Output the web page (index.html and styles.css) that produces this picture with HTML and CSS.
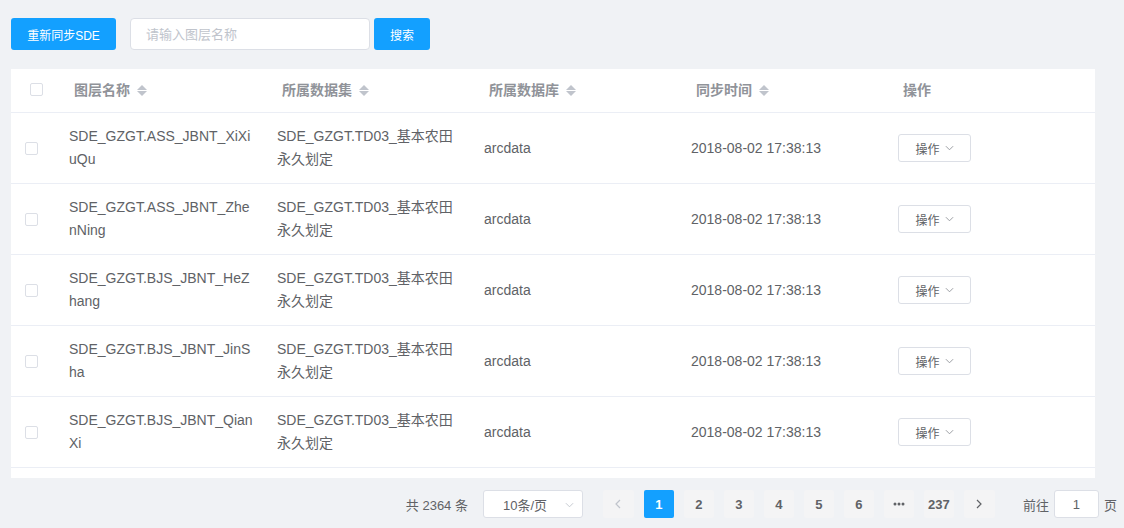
FILE: index.html
```html
<!DOCTYPE html>
<html lang="zh-CN">
<head>
<meta charset="utf-8">
<title>图层同步</title>
<link rel="stylesheet" href="styles.css">
</head>
<body>
<div class="page">
  <div class="toolbar">
    <button class="btn btn-primary btn-sync">重新同步SDE</button>
    <input class="search-input" type="text" placeholder="请输入图层名称">
    <button class="btn btn-primary btn-search">搜索</button>
  </div>

  <div class="table-wrap">
    <div class="trow thead">
      <div class="cell c-check"><span class="checkbox"></span></div>
      <div class="cell c-col c-first">图层名称<span class="sort"><i class="up"></i><i class="down"></i></span></div>
      <div class="cell c-col">所属数据集<span class="sort"><i class="up"></i><i class="down"></i></span></div>
      <div class="cell c-col">所属数据库<span class="sort"><i class="up"></i><i class="down"></i></span></div>
      <div class="cell c-col">同步时间<span class="sort"><i class="up"></i><i class="down"></i></span></div>
      <div class="cell c-last">操作</div>
    </div>

    <div class="trow tbody-row">
      <div class="cell c-check"><span class="checkbox"></span></div>
      <div class="cell c-col c-first">SDE_GZGT.ASS_JBNT_XiXiuQu</div>
      <div class="cell c-col">SDE_GZGT.TD03_基本农田永久划定</div>
      <div class="cell c-col">arcdata</div>
      <div class="cell c-col">2018-08-02 17:38:13</div>
      <div class="cell c-last"><button class="op-btn">操作<svg class="chev" viewBox="0 0 10 6" width="9" height="6"><path d="M1 1l4 4 4-4" fill="none" stroke="#909399" stroke-width="1"/></svg></button></div>
    </div>
    <div class="trow tbody-row">
      <div class="cell c-check"><span class="checkbox"></span></div>
      <div class="cell c-col c-first">SDE_GZGT.ASS_JBNT_ZhenNing</div>
      <div class="cell c-col">SDE_GZGT.TD03_基本农田永久划定</div>
      <div class="cell c-col">arcdata</div>
      <div class="cell c-col">2018-08-02 17:38:13</div>
      <div class="cell c-last"><button class="op-btn">操作<svg class="chev" viewBox="0 0 10 6" width="9" height="6"><path d="M1 1l4 4 4-4" fill="none" stroke="#909399" stroke-width="1"/></svg></button></div>
    </div>
    <div class="trow tbody-row">
      <div class="cell c-check"><span class="checkbox"></span></div>
      <div class="cell c-col c-first">SDE_GZGT.BJS_JBNT_HeZhang</div>
      <div class="cell c-col">SDE_GZGT.TD03_基本农田永久划定</div>
      <div class="cell c-col">arcdata</div>
      <div class="cell c-col">2018-08-02 17:38:13</div>
      <div class="cell c-last"><button class="op-btn">操作<svg class="chev" viewBox="0 0 10 6" width="9" height="6"><path d="M1 1l4 4 4-4" fill="none" stroke="#909399" stroke-width="1"/></svg></button></div>
    </div>
    <div class="trow tbody-row">
      <div class="cell c-check"><span class="checkbox"></span></div>
      <div class="cell c-col c-first">SDE_GZGT.BJS_JBNT_JinSha</div>
      <div class="cell c-col">SDE_GZGT.TD03_基本农田永久划定</div>
      <div class="cell c-col">arcdata</div>
      <div class="cell c-col">2018-08-02 17:38:13</div>
      <div class="cell c-last"><button class="op-btn">操作<svg class="chev" viewBox="0 0 10 6" width="9" height="6"><path d="M1 1l4 4 4-4" fill="none" stroke="#909399" stroke-width="1"/></svg></button></div>
    </div>
    <div class="trow tbody-row">
      <div class="cell c-check"><span class="checkbox"></span></div>
      <div class="cell c-col c-first">SDE_GZGT.BJS_JBNT_QianXi</div>
      <div class="cell c-col">SDE_GZGT.TD03_基本农田永久划定</div>
      <div class="cell c-col">arcdata</div>
      <div class="cell c-col">2018-08-02 17:38:13</div>
      <div class="cell c-last"><button class="op-btn">操作<svg class="chev" viewBox="0 0 10 6" width="9" height="6"><path d="M1 1l4 4 4-4" fill="none" stroke="#909399" stroke-width="1"/></svg></button></div>
    </div>
    <div class="trow tbody-row">
      <div class="cell c-check"><span class="checkbox"></span></div>
      <div class="cell c-col c-first">SDE_GZGT.BJS_JBNT_XinHua</div>
      <div class="cell c-col">SDE_GZGT.TD03_基本农田永久划定</div>
      <div class="cell c-col">arcdata</div>
      <div class="cell c-col">2018-08-02 17:38:13</div>
      <div class="cell c-last"><button class="op-btn">操作</button></div>
    </div>
  </div>

  <div class="pagination">
    <span class="total">共 2364 条</span>
    <div class="size-select"><span>10条/页</span><svg class="sel-chev" viewBox="0 0 10 6" width="9" height="6"><path d="M1 1l4 4 4-4" fill="none" stroke="#c0c4cc" stroke-width="1"/></svg></div>
    <button class="pg-btn pg-arrow disabled"><svg viewBox="0 0 6 10" width="6" height="10"><path d="M5 1L1 5l4 4" fill="none" stroke="#c0c4cc" stroke-width="1.2"/></svg></button>
    <button class="pg-btn active">1</button>
    <button class="pg-btn">2</button>
    <button class="pg-btn">3</button>
    <button class="pg-btn">4</button>
    <button class="pg-btn">5</button>
    <button class="pg-btn">6</button>
    <button class="pg-btn pg-more"><svg viewBox="0 0 12 4" width="12" height="4"><circle cx="2" cy="2" r="1.5" fill="#606266"/><circle cx="6" cy="2" r="1.5" fill="#606266"/><circle cx="10" cy="2" r="1.5" fill="#606266"/></svg></button>
    <button class="pg-btn">237</button>
    <button class="pg-btn pg-arrow"><svg viewBox="0 0 6 10" width="6" height="10"><path d="M1 1l4 4-4 4" fill="none" stroke="#606266" stroke-width="1.2"/></svg></button>
    <span class="jump"><span>前往</span><span class="jump-input">1</span><span>页</span></span>
  </div>
</div>
</body>
</html>
```

FILE: styles.css
```css
* { box-sizing: border-box; }

html, body {
  margin: 0;
  padding: 0;
}

body {
  background: #f0f2f5;
  font-family: "Liberation Sans", "Noto Sans CJK SC", sans-serif;
  color: #606266;
  font-size: 14px;
}

.page {
  padding: 18px 0 0 11px;
  width: 1124px;
  height: 528px;
  overflow: hidden;
}

.toolbar {
  display: flex;
  align-items: center;
  height: 32px;
}

.btn {
  height: 32px;
  border: none;
  border-radius: 3px;
  font-family: inherit;
  font-size: 12px;
  padding: 0;
  cursor: pointer;
}

.btn-primary {
  background: #13a0ff;
  color: #fff;
}

.btn-sync { width: 105px; }
.btn-search { width: 56px; margin-left: 4px; }

.search-input {
  margin-left: 14px;
  width: 240px;
  height: 32px;
  border: 1px solid #dcdfe6;
  border-radius: 4px;
  padding: 0 15px;
  font-family: inherit;
  font-size: 13px;
  color: #606266;
  outline: none;
  background: #fff;
}
.search-input::placeholder { color: #c0c4cc; }

.table-wrap {
  margin-top: 19px;
  width: 1084px;
  height: 409px;
  background: #fff;
  overflow: hidden;
}

.trow {
  display: flex;
  border-bottom: 1px solid #ebeef5;
}

.thead {
  height: 44px;
  align-items: center;
  font-weight: bold;
  color: #909399;
  padding-bottom: 3px;
}

.tbody-row {
  height: 71px;
  align-items: center;
  line-height: 23px;
}

.cell { flex: none; }

.c-check {
  width: 48px;
  display: flex;
  align-items: center;
}
.thead .c-check { padding-left: 19px; }
.tbody-row .c-check { padding-left: 14px; }

.c-col {
  width: 207px;
  padding: 0 10px;
  word-break: break-all;
}
.c-col.c-first { width: 208px; }
.thead .c-col, .thead .c-last { padding-left: 15px; }

.c-last {
  width: 207px;
  padding: 0 10px;
}

.checkbox {
  display: block;
  width: 13px;
  height: 13px;
  border: 1px solid #dcdfe6;
  border-radius: 2px;
  background: #fff;
}

.sort {
  display: inline-flex;
  flex-direction: column;
  vertical-align: middle;
  margin-left: 7px;
  gap: 1px;
  position: relative;
  top: -1px;
}
.sort i {
  display: block;
  width: 0;
  height: 0;
  border-left: 5px solid transparent;
  border-right: 5px solid transparent;
}
.sort .up { border-bottom: 5px solid #c0c4cc; }
.sort .down { border-top: 5px solid #c0c4cc; }

.op-btn {
  width: 73px;
  height: 28px;
  border: 1px solid #dcdfe6;
  border-radius: 3px;
  background: #fff;
  color: #606266;
  font-family: inherit;
  font-size: 12px;
  display: flex;
  align-items: center;
  justify-content: center;
  gap: 5px;
  padding: 0;
}

.pagination {
  display: flex;
  align-items: center;
  justify-content: flex-end;
  height: 28px;
  margin-top: 12px;
  padding-right: 7px;
  font-size: 13px;
}

.total {
  margin-right: 15px;
  white-space: nowrap;
}

.size-select {
  width: 100px;
  height: 28px;
  border: 1px solid #dcdfe6;
  border-radius: 3px;
  background: #fff;
  display: flex;
  align-items: center;
  padding-left: 19px;
  position: relative;
  margin-right: 15px;
  white-space: nowrap;
}
.sel-chev {
  position: absolute;
  right: 8px;
  top: 11px;
}

.pg-btn {
  min-width: 30px;
  height: 28px;
  margin: 0 5px;
  padding: 0 4px;
  border: none;
  border-radius: 2px;
  background: #f4f4f5;
  color: #606266;
  font-family: inherit;
  font-size: 13px;
  font-weight: bold;
  display: inline-flex;
  align-items: center;
  justify-content: center;
}
.pg-arrow { width: 31px; }
.pg-btn.active { background: #13a0ff; color: #fff; }

.jump {
  margin-left: 23px;
  display: inline-flex;
  align-items: center;
  white-space: nowrap;
}
.jump-input {
  display: inline-flex;
  align-items: center;
  justify-content: center;
  width: 45px;
  height: 28px;
  margin: 0 5px;
  border: 1px solid #dcdfe6;
  border-radius: 3px;
  background: #fff;
}
```
